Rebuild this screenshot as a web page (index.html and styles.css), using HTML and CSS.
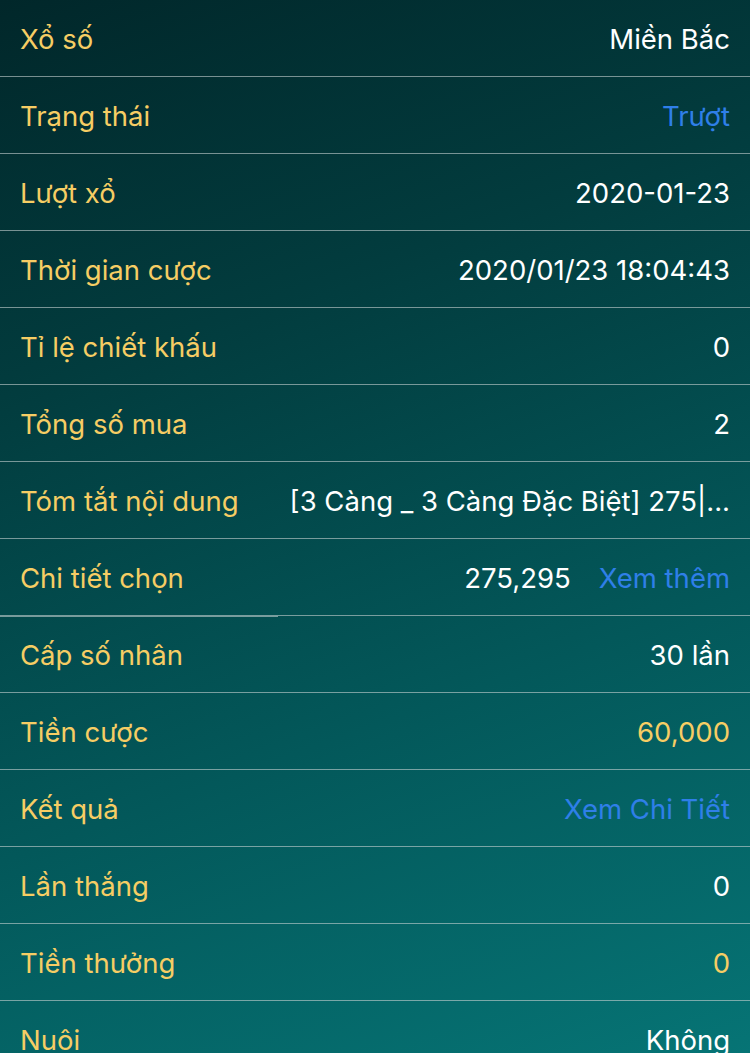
FILE: index.html
```html
<!DOCTYPE html>
<html lang="vi">
<head>
<meta charset="utf-8">
<link rel="stylesheet" href="styles.css">
</head>
<body>
<div class="list">
  <div class="row"><span class="label">Xổ số</span><span class="value">Miền Bắc</span></div>
  <div class="row"><span class="label">Trạng thái</span><span class="value blue">Trượt</span></div>
  <div class="row"><span class="label">Lượt xổ</span><span class="value">2020-01-23</span></div>
  <div class="row"><span class="label">Thời gian cược</span><span class="value">2020/01/23 18:04:43</span></div>
  <div class="row"><span class="label">Tỉ lệ chiết khấu</span><span class="value">0</span></div>
  <div class="row"><span class="label">Tổng số mua</span><span class="value">2</span></div>
  <div class="row"><span class="label">Tóm tắt nội dung</span><span class="value">[3 Càng _ 3 Càng Đặc Biệt] 275|...</span></div>
  <div class="row row-split"><span class="label">Chi tiết chọn</span><span class="value">275,295<span class="more blue">Xem thêm</span></span></div>
  <div class="row"><span class="label">Cấp số nhân</span><span class="value">30 lần</span></div>
  <div class="row"><span class="label">Tiền cược</span><span class="value yellow">60,000</span></div>
  <div class="row"><span class="label">Kết quả</span><span class="value blue">Xem Chi Tiết</span></div>
  <div class="row"><span class="label">Lần thắng</span><span class="value">0</span></div>
  <div class="row"><span class="label">Tiền thưởng</span><span class="value yellow">0</span></div>
  <div class="row"><span class="label">Nuôi</span><span class="value">Không</span></div>
</div>
</body>
</html>
```

FILE: styles.css
```css
html, body {
  margin: 0;
  padding: 0;
}
body {
  width: 750px;
  height: 1053px;
  overflow: hidden;
  background: linear-gradient(160deg, #01272a 0%, #023c3e 30%, #03585a 65%, #067475 100%);
  font-family: Inter, "Noto Sans", sans-serif;
  font-size: 27.5px;
}
.list {
  display: flex;
  flex-direction: column;
}
.row {
  height: 77px;
  flex: 0 0 77px;
  display: flex;
  align-items: center;
  justify-content: space-between;
  padding: 2px 20px 0 20px;
  box-sizing: border-box;
  border-bottom: 1px solid rgba(200, 210, 210, 0.6);
}
.label {
  color: #f6cd64;
  white-space: nowrap;
}
.value {
  color: #ffffff;
  white-space: nowrap;
}
.blue {
  color: #2f7fe8;
}
.yellow {
  color: #f6cd64;
}
.more {
  margin-left: 28px;
}
.row-split {
  position: relative;
}
.row-split::after {
  content: "";
  position: absolute;
  left: 0;
  bottom: -2px;
  width: 278px;
  height: 1px;
  background: rgba(200, 210, 210, 0.6);
}
```
